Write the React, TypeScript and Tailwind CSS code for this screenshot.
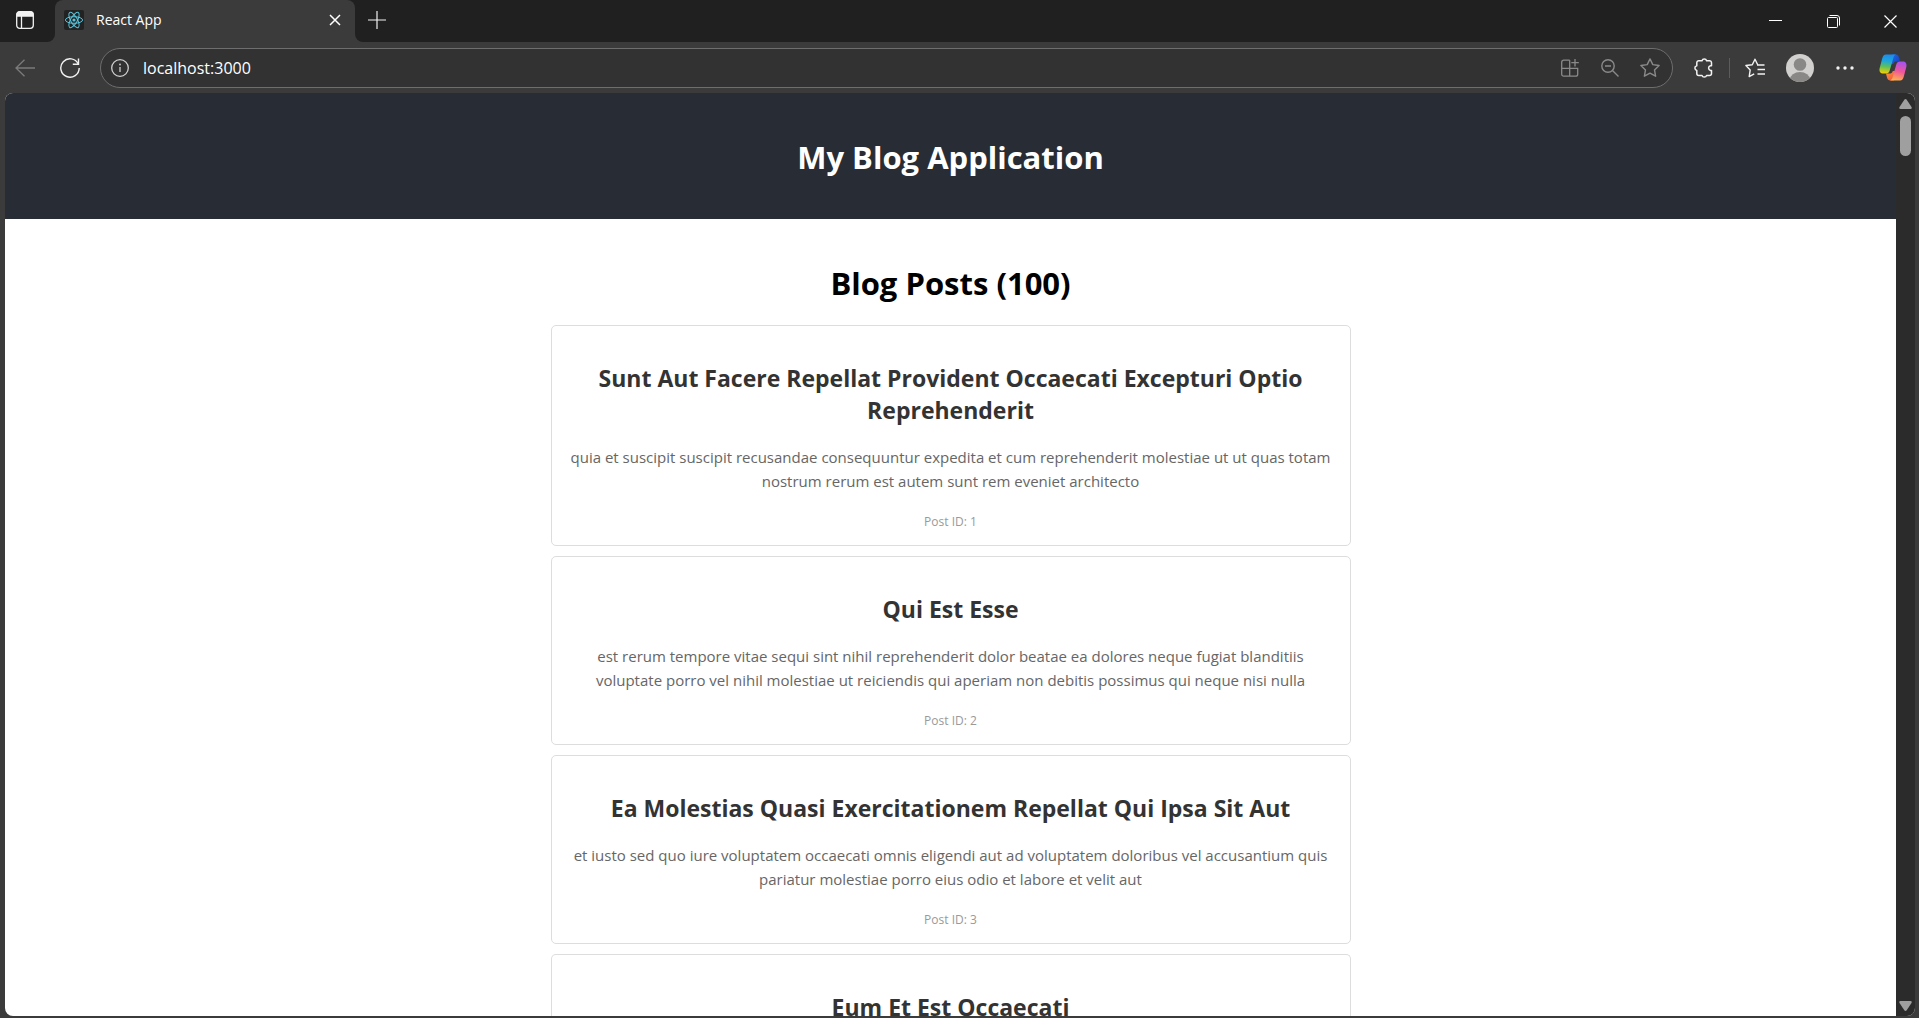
import type { ReactNode } from "react";

type Post = { id: number; title: string; body: string };

const posts: Post[] = [
  {
    id: 1,
    title: "Sunt Aut Facere Repellat Provident Occaecati Excepturi Optio Reprehenderit",
    body: "quia et suscipit suscipit recusandae consequuntur expedita et cum reprehenderit molestiae ut ut quas totam nostrum rerum est autem sunt rem eveniet architecto",
  },
  {
    id: 2,
    title: "Qui Est Esse",
    body: "est rerum tempore vitae sequi sint nihil reprehenderit dolor beatae ea dolores neque fugiat blanditiis voluptate porro vel nihil molestiae ut reiciendis qui aperiam non debitis possimus qui neque nisi nulla",
  },
  {
    id: 3,
    title: "Ea Molestias Quasi Exercitationem Repellat Qui Ipsa Sit Aut",
    body: "et iusto sed quo iure voluptatem occaecati omnis eligendi aut ad voluptatem doloribus vel accusantium quis pariatur molestiae porro eius odio et labore et velit aut",
  },
];

const nextPostTitle = "Eum Et Est Occaecati";

function IconButton({ label, className, children }: { label: string; className: string; children: ReactNode }) {
  return (
    <button type="button" aria-label={label} className={`flex shrink-0 items-center justify-center ${className}`}>
      {children}
    </button>
  );
}

function ReactLogo() {
  return (
    <svg width="20" height="20" viewBox="0 0 20 20" fill="none" stroke="#58c4dc" strokeWidth="1">
      <rect width="20" height="20" rx="2" fill="#222222" stroke="none" />
      <ellipse cx="10" cy="10" rx="8.6" ry="3.3" />
      <ellipse cx="10" cy="10" rx="8.6" ry="3.3" transform="rotate(60 10 10)" />
      <ellipse cx="10" cy="10" rx="8.6" ry="3.3" transform="rotate(120 10 10)" />
      <circle cx="10" cy="10" r="1.6" fill="#58c4dc" stroke="none" />
    </svg>
  );
}

function CopilotLogo() {
  return (
    <svg width="28" height="27" viewBox="0 0 28 27">
      <defs>
        <linearGradient id="cpLeft" x1="0.5" y1="0" x2="0.4" y2="1">
          <stop offset="0" stopColor="#1a8cf0" />
          <stop offset="0.35" stopColor="#1fa6d8" />
          <stop offset="0.65" stopColor="#5fc05a" />
          <stop offset="1" stopColor="#f5d000" />
        </linearGradient>
        <linearGradient id="cpRight" x1="0.6" y1="0" x2="0.4" y2="1">
          <stop offset="0" stopColor="#a552ef" />
          <stop offset="0.5" stopColor="#f0569a" />
          <stop offset="1" stopColor="#ffb04d" />
        </linearGradient>
        <linearGradient id="cpTop" x1="0" y1="0" x2="1" y2="0.6">
          <stop offset="0" stopColor="#1a6fe8" />
          <stop offset="1" stopColor="#1b44c8" />
        </linearGradient>
        <linearGradient id="cpBottom" x1="0" y1="0" x2="1" y2="1">
          <stop offset="0" stopColor="#ff9a3c" />
          <stop offset="1" stopColor="#ee4a3e" />
        </linearGradient>
      </defs>
      <path d="M13 .5h3.600c1.900 0 2.900 1.100 3.400 2.900l1 4.100h-3.600c-1.600 0-2.600.6-3.200 2.500H11z" fill="url(#cpTop)" />
      <path d="M15 26.500h-3.600c-1.900 0-2.900-1.100-3.400-2.900L7 19.500h3.600c1.600 0 2.600-.6 3.200-2.500H17z" fill="url(#cpBottom)" />
      <path d="M7 .5h10.500c-1.800.3-2.500 1.300-3 3L10.700 16.500c-.7 2.300-1.700 3-3.700 3H4C1 19.500 0 17 .7 14L3.200 4.500C3.900 1.900 4.900.5 7 .5z" fill="url(#cpLeft)" />
      <path d="M21 26.500H10.500c1.800-.3 2.500-1.300 3-3l3.800-13c.7-2.300 1.700-3 3.700-3H24c3 0 4 2.500 3.300 5.500l-2.500 9.500c-.7 2.600-1.700 4-3.800 4z" fill="url(#cpRight)" />
    </svg>
  );
}

function TabStrip() {
  return (
    <div className="flex h-[42px] shrink-0 text-white">
      <div className="flex w-[55px] shrink-0 rounded-br-lg bg-[#202020]">
        <IconButton label="Tab actions" className="h-10 w-[50px]">
          <svg width="18" height="18" viewBox="0 0 18 18" fill="none" stroke="#f2f2f2" strokeWidth="1.300">
            <rect x=".7" y=".7" width="16.600" height="16.600" rx="3" />
            <path d="M1 3.500a2.500 2.500 0 0 1 2.500-2.500h11a2.500 2.500 0 0 1 2.500 2.500V5H1z" fill="#f2f2f2" />
            <path d="M5.500 5v12" />
          </svg>
        </IconButton>
      </div>
      <div className="w-[300px] shrink-0 bg-[#202020]">
        <div className="flex h-full items-center rounded-t-lg bg-[#3b3b3b] pb-0.5 pl-[9px]">
          <ReactLogo />
          <span className="ml-3 flex-1 truncate text-sm">React App</span>
          <IconButton label="Close tab" className="h-8 w-10">
            <svg width="12" height="12" viewBox="0 0 12 12" stroke="#ffffff" strokeWidth="1.500">
              <path d="M1 1l10 10M11 1L1 11" />
            </svg>
          </IconButton>
        </div>
      </div>
      <div className="flex flex-1 justify-between rounded-bl-lg bg-[#202020]">
        <IconButton label="New tab" className="h-10 w-11">
          <svg width="18" height="18" viewBox="0 0 18 18" stroke="#f2f2f2" strokeWidth="1.200">
            <path d="M9 0v18M0 9h18" />
          </svg>
        </IconButton>
        <div className="flex">
          <IconButton label="Minimize" className="h-[42px] w-[58px]">
            <svg width="14" height="14" viewBox="0 0 14 14" stroke="#ffffff" shapeRendering="crispEdges">
              <path d="M0 6.500h13" />
            </svg>
          </IconButton>
          <IconButton label="Restore" className="h-[42px] w-[58px]">
            <svg width="14" height="14" viewBox="0 0 14 14" fill="none" stroke="#ffffff" strokeWidth="1">
              <rect x=".5" y="3.500" width="10" height="10" rx="1" />
              <path d="M2.500 1.500h7.500a2.500 2.500 0 0 1 2.500 2.500v7.500" />
            </svg>
          </IconButton>
          <IconButton label="Close" className="h-[42px] w-14">
            <svg width="14" height="14" viewBox="0 0 14 14" stroke="#ffffff" strokeWidth="1.200">
              <path d="M.5 1.500l12 12M12.500 1.500l-12 12" />
            </svg>
          </IconButton>
        </div>
      </div>
    </div>
  );
}

function Toolbar() {
  return (
    <div className="flex h-[51px] shrink-0 items-center pr-1.5">
      <IconButton label="Back" className="h-10 w-[50px]">
        <svg width="20" height="18" viewBox="0 0 20 18" fill="none" stroke="#7b7b7b" strokeWidth="1.300">
          <path d="M20 9H1M9.500 .7L1 9l8.500 8.300" />
        </svg>
      </IconButton>
      <IconButton label="Refresh" className="h-10 w-10">
        <svg width="20" height="20" viewBox="0 0 20 20" fill="none" stroke="#f2f2f2" strokeWidth="1.400">
          <path d="M18.300 6A9.200 9.200 0 1 0 19.200 10" />
          <path d="M18.500 .5v5.700h-5.700" />
        </svg>
      </IconButton>
      <div className="ml-2.5 flex h-10 flex-1 items-center rounded-full border border-[#6e6e6e] bg-[#323232] pr-0.5">
        <IconButton label="Site information" className="h-9 w-[38px]">
          <svg width="18" height="18" viewBox="0 0 18 18" fill="none" stroke="#d0d0d0" strokeWidth="1.300">
            <circle cx="9" cy="9" r="8.300" />
            <path d="M9 8v5" />
            <circle cx="9" cy="5.500" r=".9" fill="#d0d0d0" stroke="none" />
          </svg>
        </IconButton>
        <input
          type="text"
          aria-label="Address"
          defaultValue="localhost:3000"
          className="ml-1 min-w-0 flex-1 bg-transparent text-base text-white outline-none"
        />
        <IconButton label="Install app" className="h-9 w-10">
          <svg width="18" height="18" viewBox="0 0 18 18" fill="none" stroke="#8a8a8a" strokeWidth="1.300">
            <path d="M8.700 1.200H2.700a2 2 0 0 0-2 2v12a2 2 0 0 0 2 2h12a2 2 0 0 0 2-2V9.300H.7M8.700 1.200v16M14 0v7.500M10.300 3.700h7.500" />
          </svg>
        </IconButton>
        <IconButton label="Zoom out" className="h-9 w-10">
          <svg width="18" height="18" viewBox="0 0 18 18" fill="none" stroke="#8a8a8a" strokeWidth="1.400">
            <circle cx="7" cy="7" r="6.200" />
            <path d="M4 7h6M11.500 11.500l6 6" />
          </svg>
        </IconButton>
        <IconButton label="Add to favorites" className="h-9 w-10">
          <svg width="20" height="20" viewBox="0 0 20 20" fill="none" stroke="#8a8a8a" strokeWidth="1.400" strokeLinejoin="round">
            <path d="M10 .9l2.800 5.700 6.300.9-4.600 4.400 1.100 6.300L10 15.200l-5.600 3 1.100-6.300L.9 7.500l6.300-.9z" />
          </svg>
        </IconButton>
      </div>
      <IconButton label="Extensions" className="ml-[11px] h-10 w-10">
        <svg width="20" height="20" viewBox="0 0 20 20" fill="none" stroke="#f2f2f2" strokeWidth="1.500" strokeLinejoin="round">
          <path d="M4.800 2.700h3.200a2.400 2.400 0 0 1 4.600 0h2.900a2 2 0 0 1 2 2v3h-1a2.400 2.400 0 0 0 0 4.700h1v3a2 2 0 0 1-2 2h-2.900a2.400 2.400 0 0 1-4.600 0H4.800a2 2 0 0 1-2-2v-3a2.400 2.400 0 0 1 0-4.700v-3a2 2 0 0 1 2-2z" />
        </svg>
      </IconButton>
      <div className="mx-[5px] h-5 w-px bg-[#5c5c5c]" />
      <IconButton label="Favorites" className="h-10 w-10">
        <svg width="20" height="20" viewBox="0 0 20 20" fill="none" stroke="#f2f2f2" strokeWidth="1.400" strokeLinejoin="round">
          <path d="M19 7h-6.200L10 1.200 7.300 6.800.9 7.500l4.300 4.400-1 6.700 5-2.800M12 7h7.500M12.500 11.500h7.500M12.500 16h7.500" />
        </svg>
      </IconButton>
      <IconButton label="Profile" className="ml-[5px] h-10 w-10">
        <svg width="28" height="28" viewBox="0 0 28 28">
          <defs>
            <clipPath id="avatarClip">
              <circle cx="14" cy="14" r="14" />
            </clipPath>
          </defs>
          <g clipPath="url(#avatarClip)">
            <rect width="28" height="28" fill="#d2d0ce" />
            <circle cx="14" cy="10.500" r="6.300" fill="#8a8886" />
            <ellipse cx="14" cy="25.500" rx="10" ry="7.500" fill="#8a8886" />
          </g>
        </svg>
      </IconButton>
      <IconButton label="Settings and more" className="ml-[5px] h-10 w-10">
        <svg width="18" height="4" viewBox="0 0 18 4" fill="#f2f2f2">
          <circle cx="2" cy="2" r="1.700" />
          <circle cx="9" cy="2" r="1.700" />
          <circle cx="16" cy="2" r="1.700" />
        </svg>
      </IconButton>
      <IconButton label="Copilot" className="ml-2 h-10 w-10">
        <CopilotLogo />
      </IconButton>
    </div>
  );
}

function PostTitle({ children }: { children: ReactNode }) {
  return <h2 className="text-[23px] leading-8 font-bold text-[#333333]">{children}</h2>;
}

function PostCard({ post }: { post: Post }) {
  return (
    <article className="rounded-[5px] border border-[#dddddd] px-[15px] pt-9 pb-3.5">
      <PostTitle>{post.title}</PostTitle>
      <p className="mt-[19px] text-[15px] leading-6 text-[#666666]">{post.body}</p>
      <p className="mt-5 text-xs leading-[18px] text-[#999999]">Post ID: {post.id}</p>
    </article>
  );
}

function ScrollBar() {
  return (
    <div className="flex w-[19px] shrink-0 flex-col items-center justify-between bg-[#2b2b2b] pt-1.5 pb-[5px]">
      <div className="flex flex-col items-center gap-[7px]">
        <svg width="13" height="10" viewBox="0 0 13 10" fill="#9f9f9f">
          <path d="M5.300 .7q1.200-1.200 2.400 0l4.800 7.300q.8 2-1 2h-10q-1.800 0-1-2z" />
        </svg>
        <div className="h-10 w-[11px] rounded-full bg-[#9f9f9f]" />
      </div>
      <svg width="13" height="10" viewBox="0 0 13 10" fill="#9f9f9f">
        <path d="M5.300 9.300q1.200 1.200 2.400 0l4.800-7.300q.8-2-1-2h-10q-1.800 0-1 2z" />
      </svg>
    </div>
  );
}

export default function App() {
  return (
    <div className="flex h-screen flex-col overflow-hidden bg-[#3b3b3b] font-['Open_Sans','Noto_Sans',sans-serif]">
      <TabStrip />
      <Toolbar />
      <div className="mr-1 mb-0.5 ml-[5px] flex min-h-0 flex-1 overflow-hidden rounded-lg bg-white">
        <div className="min-w-0 flex-1 overflow-hidden text-center">
          <header className="bg-[#282c34] px-5 pt-[43px] pb-10">
            <h1 className="text-[31px] leading-[43px] font-bold text-white">My Blog Application</h1>
          </header>
          <main className="mx-auto flex max-w-[800px] flex-col gap-2.5 pt-[43px]">
            <h1 className="mb-2.5 text-[31px] leading-[43px] font-bold text-black">Blog Posts (100)</h1>
            {posts.map((post) => (
              <PostCard key={post.id} post={post} />
            ))}
            <article className="rounded-t-[5px] border border-b-0 border-[#dddddd] px-[15px] pt-9">
              <PostTitle>{nextPostTitle}</PostTitle>
            </article>
          </main>
        </div>
        <ScrollBar />
      </div>
    </div>
  );
}
